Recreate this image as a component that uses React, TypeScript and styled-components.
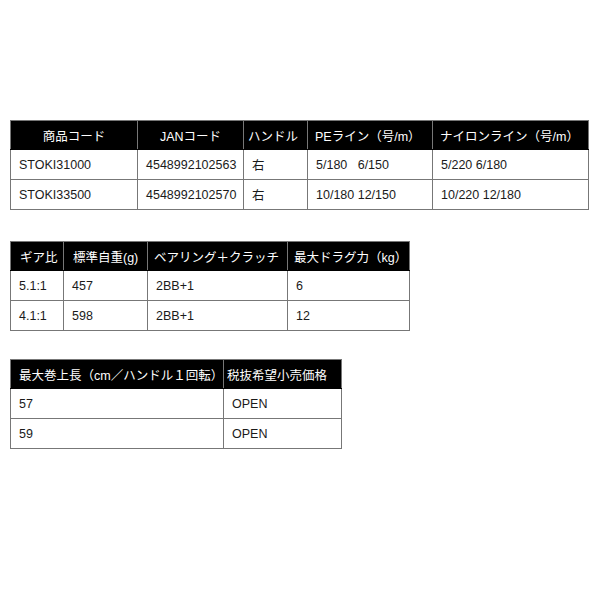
import React from "react";
import styled, { createGlobalStyle } from "styled-components";

const GlobalStyle = createGlobalStyle`
  html, body {
    margin: 0;
    padding: 0;
    background: #fff;
  }
  body {
    font-family: "Liberation Sans", "Noto Sans CJK JP", sans-serif;
    font-size: 12.5px;
    color: #1a1a1a;
  }
`;

const Page = styled.div`
  width: 600px;
  height: 600px;
  box-sizing: border-box;
  padding: 120px 0 0 10px;
  display: flex;
  flex-direction: column;
  align-items: flex-start;
`;

const SpecTable = styled.table<{ $gap?: number; $w: number }>`
  width: ${(p) => p.$w}px;
  border-collapse: collapse;
  table-layout: fixed;
  margin-top: ${(p) => p.$gap ?? 0}px;
`;

const HeadCell = styled.th<{ $w: number; $align?: string; $pad?: number }>`
  width: ${(p) => p.$w}px;
  height: 29px;
  box-sizing: border-box;
  background: #000;
  color: #fff;
  font-weight: normal;
  white-space: nowrap;
  overflow: hidden;
  text-align: ${(p) => p.$align ?? "left"};
  padding: 0 0 0 ${(p) => p.$pad ?? 8}px;
  border: 1px solid #777;
  border-bottom-color: #000;
`;

const Cell = styled.td`
  height: 30px;
  box-sizing: border-box;
  padding: 0 0 0 8px;
  white-space: pre;
  overflow: hidden;
  border: 1px solid #777;
`;

type Col = { label: string; w: number; align?: string; pad?: number };

const Table = ({ cols, rows, gap }: { cols: Col[]; rows: string[][]; gap?: number }) => (
  <SpecTable $gap={gap} $w={cols.reduce((s, c) => s + c.w, 0)}>
    <thead>
      <tr>
        {cols.map((c) => (
          <HeadCell key={c.label} $w={c.w} $align={c.align} $pad={c.pad}>
            {c.label}
          </HeadCell>
        ))}
      </tr>
    </thead>
    <tbody>
      {rows.map((r, i) => (
        <tr key={i}>
          {r.map((v, j) => (
            <Cell key={j}>{v}</Cell>
          ))}
        </tr>
      ))}
    </tbody>
  </SpecTable>
);

const models: Col[] = [
  { label: "商品コード", w: 127, align: "center", pad: 0 },
  { label: "JANコード", w: 106, align: "center", pad: 0 },
  { label: "ハンドル", w: 64, pad: 4 },
  { label: "PEライン（号/m）", w: 125, pad: 7 },
  { label: "ナイロンライン（号/m）", w: 156, pad: 7 },
];

const gears: Col[] = [
  { label: "ギア比", w: 53, pad: 9 },
  { label: "標準自重(g)", w: 84, pad: 9 },
  { label: "ベアリング＋クラッチ", w: 140, pad: 6 },
  { label: "最大ドラグ力（kg）", w: 122, pad: 6 },
];

const prices: Col[] = [
  { label: "最大巻上長（cm／ハンドル１回転）", w: 213, pad: 8 },
  { label: "税抜希望小売価格", w: 118, pad: 3 },
];

export default function App() {
  return (
    <>
      <GlobalStyle />
      <Page>
        <Table
          cols={models}
          rows={[
            ["STOKI31000", "4548992102563", "右", "5/180   6/150", "5/220 6/180"],
            ["STOKI33500", "4548992102570", "右", "10/180 12/150", "10/220 12/180"],
          ]}
        />
        <Table
          gap={31}
          cols={gears}
          rows={[
            ["5.1:1", "457", "2BB+1", "6"],
            ["4.1:1", "598", "2BB+1", "12"],
          ]}
        />
        <Table
          gap={28}
          cols={prices}
          rows={[
            ["57", "OPEN"],
            ["59", "OPEN"],
          ]}
        />
      </Page>
    </>
  );
}
